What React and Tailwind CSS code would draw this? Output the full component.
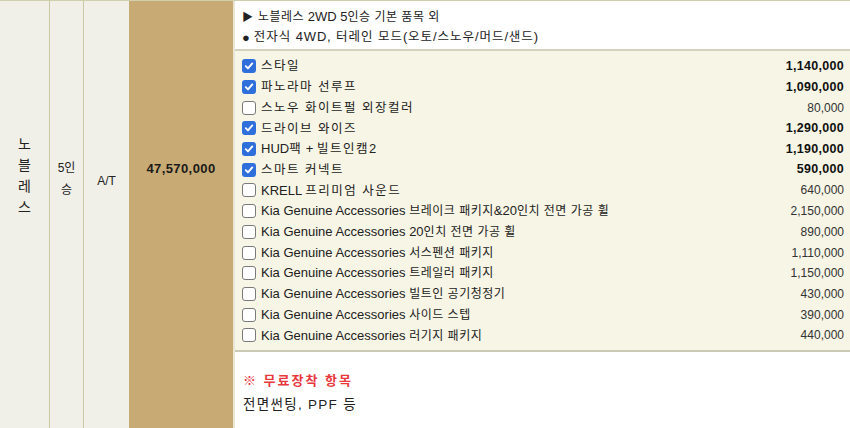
import React from 'react';

const options = [
  { name: '스타일', price: '1,140,000', checked: true },
  { name: '파노라마 선루프', price: '1,090,000', checked: true },
  { name: '스노우 화이트펄 외장컬러', price: '80,000', checked: false },
  { name: '드라이브 와이즈', price: '1,290,000', checked: true },
  { name: 'HUD팩 + 빌트인캠2', price: '1,190,000', checked: true },
  { name: '스마트 커넥트', price: '590,000', checked: true },
  { name: 'KRELL 프리미엄 사운드', price: '640,000', checked: false },
  { name: 'Kia Genuine Accessories 브레이크 패키지&20인치 전면 가공 휠', price: '2,150,000', checked: false },
  { name: 'Kia Genuine Accessories 20인치 전면 가공 휠', price: '890,000', checked: false },
  { name: 'Kia Genuine Accessories 서스펜션 패키지', price: '1,110,000', checked: false },
  { name: 'Kia Genuine Accessories 트레일러 패키지', price: '1,150,000', checked: false },
  { name: 'Kia Genuine Accessories 빌트인 공기청정기', price: '430,000', checked: false },
  { name: 'Kia Genuine Accessories 사이드 스텝', price: '390,000', checked: false },
  { name: 'Kia Genuine Accessories 러기지 패키지', price: '440,000', checked: false },
];

// 한글 부분만 따로 크기/자간 조정 (원본 굴림체 폭에 맞춤)
const Txt = ({ children, k = 'text-[12px] tracking-[0.5px]' }) =>
  String(children)
    .split(/([가-힣]+(?:[ ][가-힣]+)*)/)
    .map((part, i) =>
      /[가-힣]/.test(part) ? (
        <span key={i} className={k}>{part}</span>
      ) : (
        <span key={i}>{part}</span>
      )
    );

const Check = ({ checked }) =>
  checked ? (
    <span className="w-[14px] h-[14px] rounded-[3px] bg-[#2f6fdc] flex items-center justify-center shrink-0">
      <svg width="10" height="10" viewBox="0 0 10 10">
        <path d="M1.8 5.2 L4 7.4 L8.3 2.4" stroke="#fff" strokeWidth="1.9" fill="none" strokeLinecap="round" strokeLinejoin="round" />
      </svg>
    </span>
  ) : (
    <span className="w-[14px] h-[14px] rounded-[3px] border border-[#7a7a7a] bg-white shrink-0" />
  );

const App = () => {
  return (
    <div
      className="w-[850px] h-[428px] overflow-hidden bg-white text-[#222] text-[13px]"
      style={{ fontFamily: '"Liberation Sans", "Noto Sans CJK KR", sans-serif' }}
    >
      <div className="flex h-full border-t border-[#cfcfae]">
        {/* 모델 */}
        <div className="w-[50px] bg-[#f1f0e8] border-r border-[#c9c9a6] flex flex-col items-center pt-[133px] text-[14px] leading-[21px]">
          <span>노</span>
          <span>블</span>
          <span>레</span>
          <span>스</span>
        </div>
        {/* 인승 */}
        <div className="w-[34px] bg-[#f1f0e8] border-r border-[#c9c9a6] flex flex-col items-center pt-[156px] text-[12px] leading-[22px]">
          <span>5인</span>
          <span>승</span>
        </div>
        {/* 변속기 */}
        <div className="w-[45px] bg-[#f1f0e8] flex justify-center pt-[169px] text-[12px] leading-[22px]">
          A/T
        </div>
        {/* 가격 */}
        <div className="w-[104px] bg-[#c8ab74] flex justify-center pt-[157px] font-bold text-[13px] tracking-[0.4px] leading-[22px] text-[#1a1a1a]">
          47,570,000
        </div>
        {/* 옵션 */}
        <div className="flex-1 flex flex-col border-l-2 border-[#e9e7d3]">
          <div className="h-[50px] bg-white border-b-2 border-[#d4d2bd] pl-[7px] pt-[6px] text-[13px] leading-[19px]">
            <div className="flex items-center gap-[5px]">
              <span className="text-[11px]">▶</span>
              <span><Txt>노블레스 2WD 5인승 기본 품목 외</Txt></span>
            </div>
            <div className="flex items-center gap-[4px]">
              <span className="text-[13px]">●</span>
              <span className="tracking-[0.8px]">
                <Txt k="text-[12.5px] tracking-[1px]">전자식 4WD, 터레인 모드(오토/스노우/머드/샌드)</Txt>
              </span>
            </div>
          </div>
          <div className="bg-[#f7f5e5] border-b-2 border-[#cbc9b4] pt-[5px] pb-[4px] pl-[7px] pr-[6px]">
            {options.map((o, i) => (
              <div key={i} className="h-[20.7px] flex items-center">
                <Check checked={o.checked} />
                <span className="ml-[5px] flex-1">
                  {o.name.startsWith('Kia') ? (
                    <Txt>{o.name}</Txt>
                  ) : (
                    <Txt k="text-[12.5px] tracking-[1.5px]">{o.name}</Txt>
                  )}
                </span>
                <span className={o.checked ? 'font-bold text-[#111] text-[12.5px] tracking-[0.3px]' : 'text-[#333] text-[12px]'}>{o.price}</span>
              </div>
            ))}
          </div>
          <div className="flex-1 bg-white pl-[8px] pt-[17px] leading-[24px]">
            <div className="text-[#e8383d] font-bold text-[13px] tracking-[2px]">※ 무료장착 항목</div>
            <div className="text-[13.5px] tracking-[1.3px] text-[#222]">전면썬팅, PPF 등</div>
          </div>
        </div>
      </div>
    </div>
  );
};

export default App;
